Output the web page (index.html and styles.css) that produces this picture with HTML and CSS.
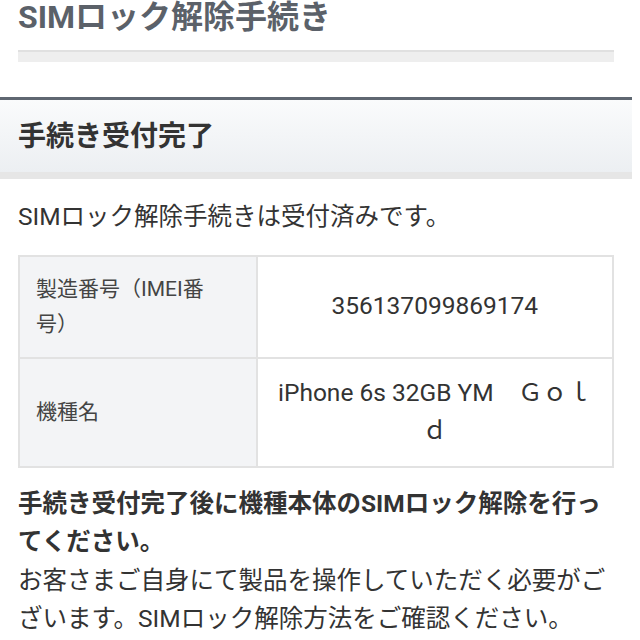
FILE: index.html
```html
<!DOCTYPE html>
<html lang="ja">
<head>
    <meta charset="UTF-8">
    <meta name="viewport" content="width=device-width, initial-scale=1.0">
    <title>SIMロック解除手続き</title>
    <link rel="stylesheet" href="styles.css">
</head>
<body>

    <!-- Page title -->
    <div class="page-top">
        <h1 class="page-title">SIMロック解除手続き</h1>
        <div class="title-bar"></div>
    </div>

    <!-- Result panel -->
    <section class="panel">
        <h2 class="panel-head">手続き受付完了</h2>
        <div class="panel-body">
            <p class="lead">SIMロック解除手続きは受付済みです。</p>

            <table class="info">
                <tr>
                    <th>製造番号（IMEI番号）</th>
                    <td>356137099869174</td>
                </tr>
                <tr>
                    <th>機種名</th>
                    <td>iPhone 6s 32GB YM　Ｇｏｌｄ</td>
                </tr>
            </table>

            <p class="notice">
                <strong>手続き受付完了後に機種本体のSIMロック解除を行ってください。</strong><br>お客さまご自身にて製品を操作していただく必要がございます。SIMロック解除方法をご確認ください。
            </p>
        </div>
    </section>

</body>
</html>
```

FILE: styles.css
```css
/* Basic Reset */
* { margin: 0; padding: 0; box-sizing: border-box; }

body {
    font-family: Roboto, "Noto Sans CJK JP", sans-serif;
    font-size: 24.5px;
    line-height: 38.5px;
    color: #333;
    background-color: #fff;
    overflow: hidden;
}

/* Page title */
.page-top {
    padding: 0 26px 0 18px;
}
.page-title {
    margin-top: -5px;
    font-size: 32px;
    line-height: 45px;
    font-weight: bold;
    color: #5b6169;
}
.title-bar {
    margin-top: 10px;
    height: 12px;
    background-color: #eeeeee;
    border-top: 2px solid #e0e0e0;
}

/* Panel */
.panel {
    margin: 35px 8px 0 0;
    border-top: 3px solid #5f6771;
}
.panel-head {
    height: 79px;
    padding: 2px 18px 0;
    font-size: 28px;
    line-height: 70px;
    font-weight: bold;
    color: #333;
    background: linear-gradient(#fafbfc, #eceff2);
    border-bottom: 7px solid #e6e6e6;
}
.panel-body {
    padding: 0 18px;
}
.lead {
    margin-top: 19px;
}

/* Info table */
.info {
    width: 100%;
    margin-top: 18px;
    border-collapse: collapse;
    border: 2px solid #e2e2e2;
}
.info th, .info td {
    border: 2px solid #e2e2e2;
    padding: 15px 16px;
    vertical-align: middle;
}
.info th {
    width: 40%;
    padding-right: 26px;
    font-size: 21px;
    line-height: 35px;
    font-weight: normal;
    text-align: left;
    color: #444;
    background-color: #f3f4f6;
}
.info td {
    text-align: center;
    color: #333;
}

/* Notice */
.notice {
    margin-top: 17px;
}
.notice strong {
    font-weight: bold;
}
```
